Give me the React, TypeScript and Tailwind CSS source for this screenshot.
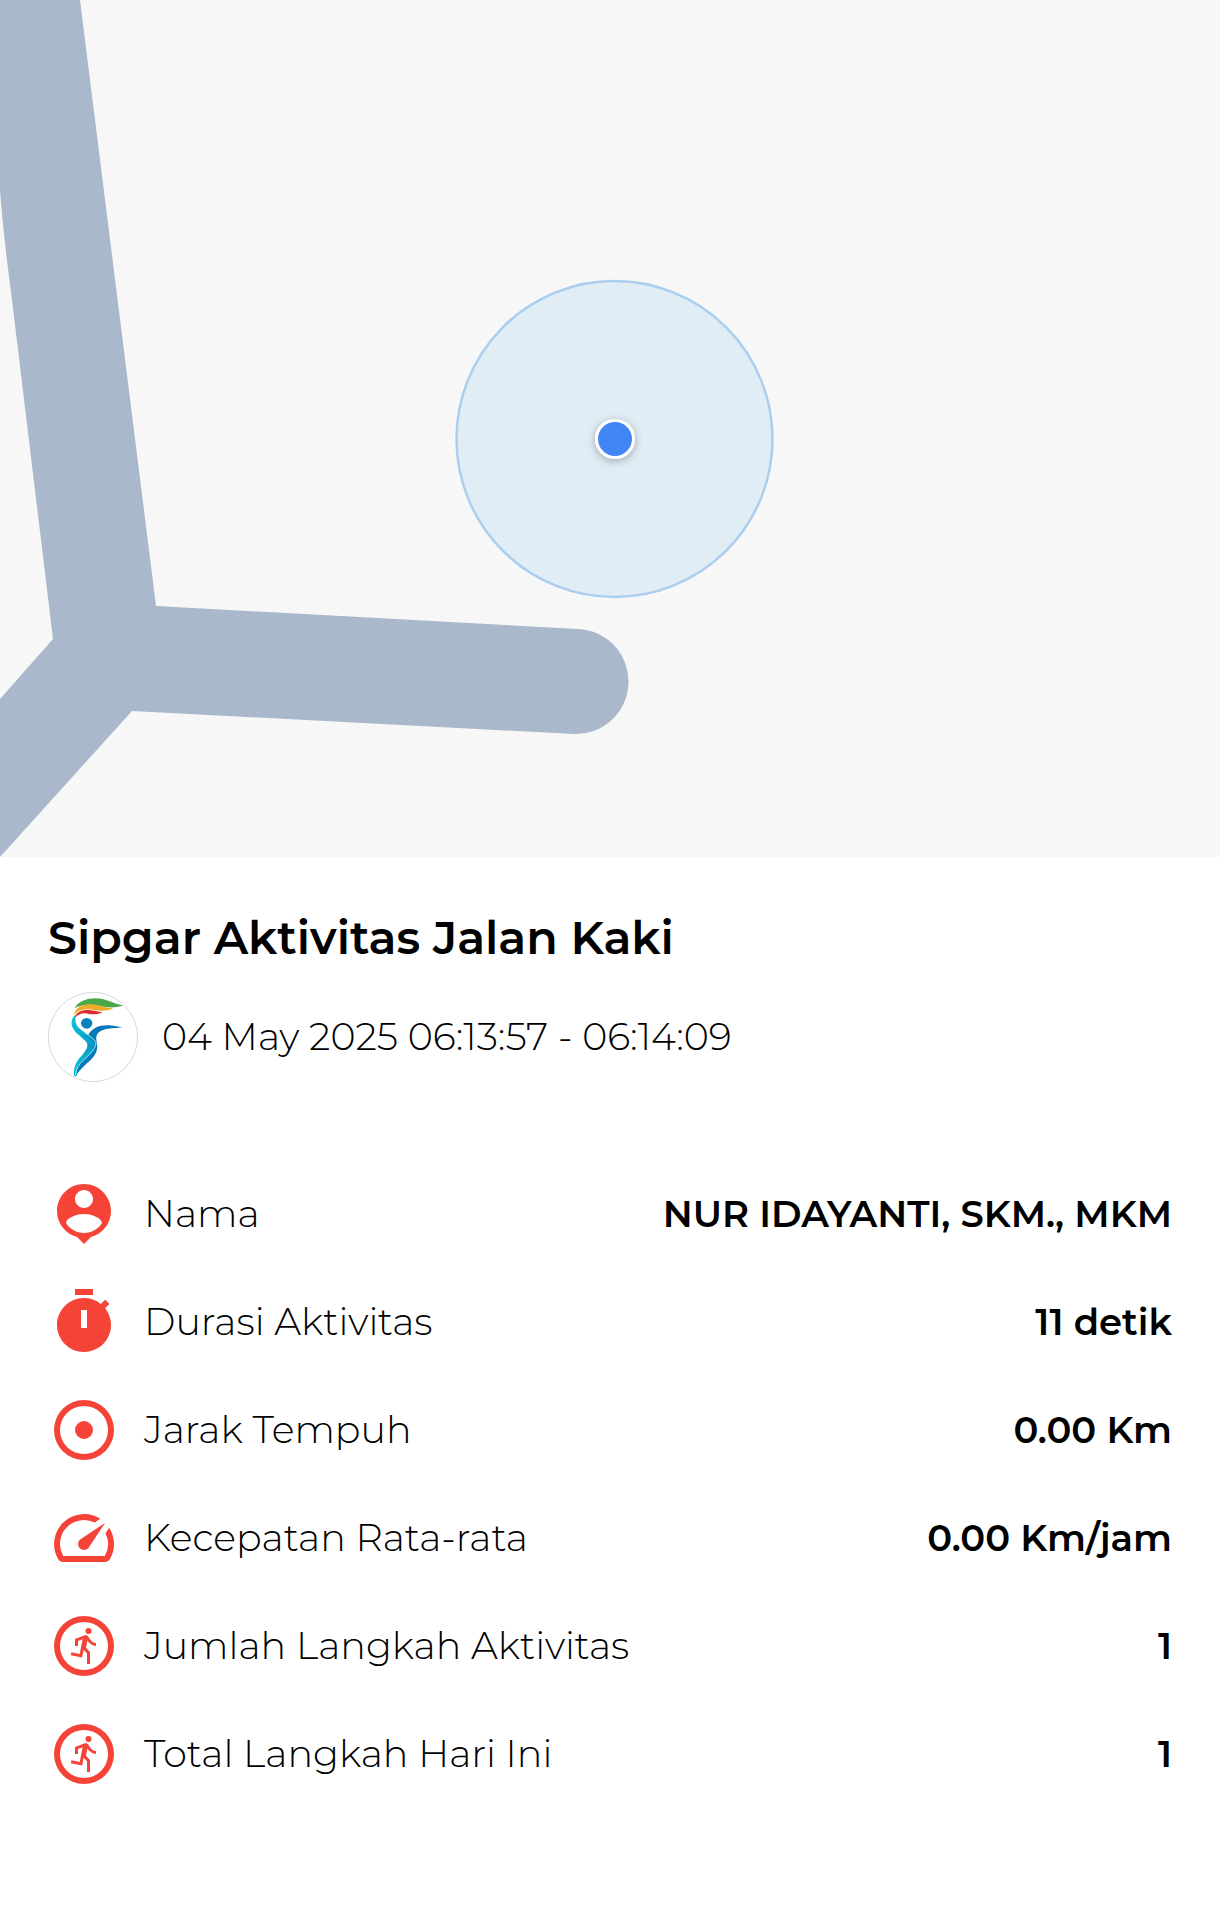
import type { ReactNode } from "react";

type StatRowProps = {
  icon: ReactNode;
  label: string;
  value: string;
};

function Icon({ children }: { children: ReactNode }) {
  return (
    <svg viewBox="0 0 24 24" className="size-18 shrink-0 fill-[#f64337]" aria-hidden="true">
      {children}
    </svg>
  );
}

function PersonPinIcon() {
  return (
    <Icon>
      <path d="M12 2c-4.97 0-9 4.03-9 9 0 4.17 2.84 7.67 6.69 8.69L12 22l2.31-2.31C18.16 18.67 21 15.17 21 11c0-4.97-4.03-9-9-9zm0 2c1.66 0 3 1.34 3 3s-1.34 3-3 3-3-1.34-3-3 1.34-3 3-3zm0 14.3c-2.5 0-4.71-1.28-6-3.22.03-1.99 4-3.08 6-3.08 1.99 0 5.97 1.09 6 3.08-1.29 1.94-3.5 3.22-6 3.22z" />
    </Icon>
  );
}

function TimerIcon() {
  return (
    <Icon>
      <path d="M15 1H9v2h6V1zm4.03 6.39l1.42-1.42c-.43-.51-.9-.99-1.41-1.41l-1.42 1.42A8.962 8.962 0 0012 4c-4.97 0-9 4.03-9 9s4.02 9 9 9a8.994 8.994 0 007.03-14.61zM13 14h-2V8h2v6z" />
    </Icon>
  );
}

function TargetIcon() {
  return (
    <Icon>
      <path d="M12 2a10 10 0 100 20 10 10 0 000-20zm0 18a8 8 0 110-16 8 8 0 010 16zm0-11a3 3 0 100 6 3 3 0 000-6z" />
    </Icon>
  );
}

function SpeedIcon() {
  return (
    <Icon>
      <path d="M20.38 8.57l-1.23 1.85a8 8 0 01-.22 7.58H5.07A8 8 0 0115.58 6.85l1.85-1.23A10 10 0 003.35 19a2 2 0 001.72 1h13.85a2 2 0 001.74-1 10 10 0 00-.27-10.44z" />
      <path d="M10.59 15.41a2 2 0 002.83 0l5.66-8.49-8.49 5.66a2 2 0 000 2.83z" />
    </Icon>
  );
}

function RunIcon() {
  return (
    <Icon>
      <path d="M12 2a10 10 0 100 20 10 10 0 000-20zm0 18a8 8 0 110-16 8 8 0 010 16z" />
      <circle cx="13.5" cy="7" r="1" />
      <path d="M16 12c-.7 0-2.01-.54-2.91-1.76l-.41 2.35L14 14.03V18h-1v-3.58l-1.11-1.21-.52 2.64-3.77-.77.2-.98 2.78.57.96-4.89-1.54.57V12H9V9.65l3.28-1.21c.49-.18 1.03.06 1.26.53C14.37 10.67 15.59 11 16 11v1z" />
    </Icon>
  );
}

function ActivityMap() {
  return (
    <svg viewBox="0 0 1220 857" className="block h-auto w-full bg-[#f7f7f7]" role="img" aria-label="Peta aktivitas">
      <defs>
        <filter id="dot-shadow" x="-50%" y="-50%" width="200%" height="200%">
          <feDropShadow dx="0" dy="2" stdDeviation="4" floodColor="#000" floodOpacity="0.3" />
        </filter>
      </defs>
      <path
        d="M0 0H80L156 606L578 629A52 52 0 0 1 574 734L132 711L0 857V699L53 639L12 300Q3 232 0 190Z"
        fill="#a9b8ca"
      />
      <circle cx="614.5" cy="439" r="158" fill="#e0edf5" stroke="#abceef" strokeWidth="2.5" />
      <circle cx="615" cy="439" r="20" fill="#fff" filter="url(#dot-shadow)" />
      <circle cx="615" cy="439" r="17" fill="#4285f4" />
    </svg>
  );
}

function Logo() {
  return (
    <svg viewBox="54 275 270 270" className="size-[90px] shrink-0" role="img" aria-label="Sipgar">
      <defs>
        <linearGradient id="arm" x1="0" x2="1" y1="0" y2="1">
          <stop offset="0" stopColor="#12c3d6" />
          <stop offset="0.5" stopColor="#08a5cc" />
          <stop offset="1" stopColor="#0583bd" />
        </linearGradient>
        <linearGradient id="leg" x1="1" x2="0" y1="0" y2="1">
          <stop offset="0" stopColor="#0784bf" />
          <stop offset="0.5" stopColor="#06b0cf" />
          <stop offset="1" stopColor="#06bdd2" />
        </linearGradient>
      </defs>
      <circle cx="189" cy="410" r="134" fill="#fff" stroke="#c4c4c4" strokeWidth="2" />
      <path d="M134 324C144 304 168 294 197 294C227 294 246 310 280 315C257 324 231 322 211 318C181 310 155 311 134 324Z" fill="#4aa84a" />
      <path d="M132 344C135 322 158 311 184 312C207 313 223 323 250 324C231 334 211 332 190 329C164 323 144 329 132 344Z" fill="#f0ad2c" />
      <path d="M134 354C136 335 157 328 177 329C192 330 203 335 218 335C203 344 188 342 173 340C157 337 144 341 134 354Z" fill="#dd2b2b" />
      <ellipse cx="170" cy="369" rx="17" ry="16" fill="#0583bd" />
      <path d="M135 345C124 353 121 373 130 386C140 402 158 412 169 425C181 441 155 464 144 482C136 495 134 510 136 529C149 503 184 477 195 455C204 437 197 422 183 410C165 395 141 386 137 366Z" fill="url(#arm)" />
      <path d="M174 405C187 380 211 373 239 375C255 376 265 380 278 382C248 382 218 384 205 397C197 406 198 416 201 428C204 449 198 463 182 479C164 496 145 510 136 531C137 500 151 489 170 473C190 456 200 440 193 423C189 415 183 411 174 405Z" fill="#0579b8" />
      <path d="M165 404C179 410 193 419 194 430C195 448 165 460 150 479C139 493 135 509 136 526" fill="none" stroke="url(#leg)" strokeWidth="9" />
      <path d="M166 399C183 409 197 419 198 430C194 454 166 471 151 489C141 502 138 512 136 525" fill="none" stroke="#fff" strokeWidth="2" />
    </svg>
  );
}

function StatRow({ icon, label, value }: StatRowProps) {
  return (
    <div className="flex items-center justify-between gap-6">
      <dt className="flex items-center gap-6 text-[38px] font-light">
        {icon}
        {label}
      </dt>
      <dd className="text-right text-[37px] font-semibold">{value}</dd>
    </div>
  );
}

export default function App() {
  return (
    <main className="min-h-screen bg-white font-['Montserrat','Inter',sans-serif] text-black">
      <ActivityMap />

      <section className="px-12 pt-[51px] pb-24">
        <h1 className="text-[46px] leading-[60px] font-semibold">Sipgar Aktivitas Jalan Kaki</h1>

        <div className="mt-6 flex items-center gap-6">
          <Logo />
          <p className="text-[38px] leading-[48px] font-light">04 May 2025 06:13:57 - 06:14:09</p>
        </div>

        <dl className="mt-24 grid gap-9 leading-[48px]">
          <StatRow icon={<PersonPinIcon />} label="Nama" value="NUR IDAYANTI, SKM., MKM" />
          <StatRow icon={<TimerIcon />} label="Durasi Aktivitas" value="11 detik" />
          <StatRow icon={<TargetIcon />} label="Jarak Tempuh" value="0.00 Km" />
          <StatRow icon={<SpeedIcon />} label="Kecepatan Rata-rata" value="0.00 Km/jam" />
          <StatRow icon={<RunIcon />} label="Jumlah Langkah Aktivitas" value="1" />
          <StatRow icon={<RunIcon />} label="Total Langkah Hari Ini" value="1" />
        </dl>
      </section>
    </main>
  );
}
